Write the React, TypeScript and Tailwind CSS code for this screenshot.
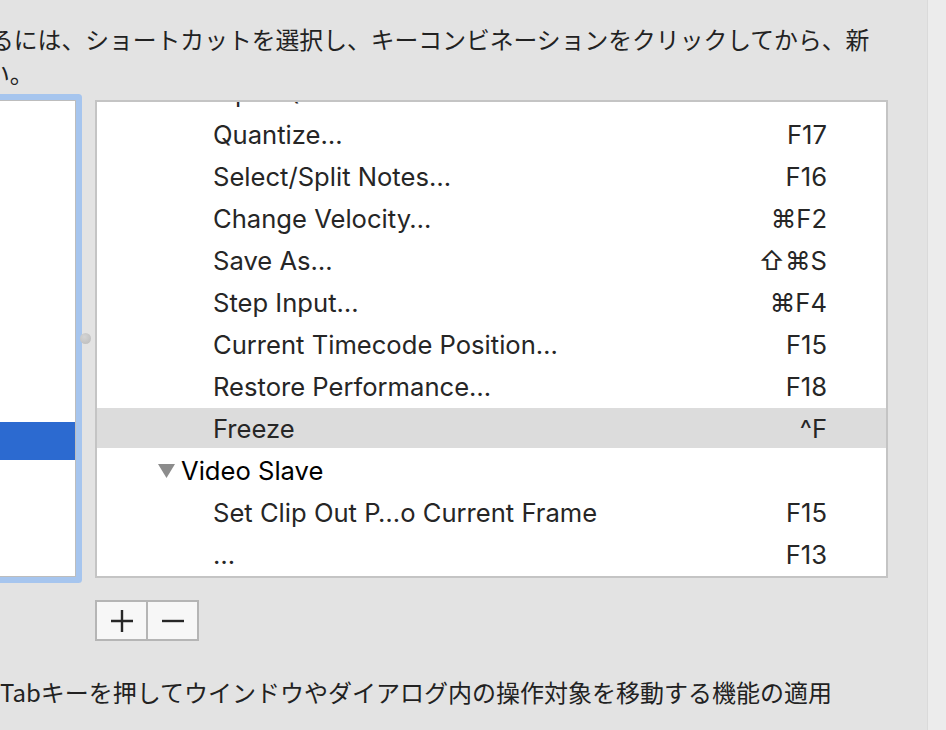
import React from "react";

const latin = "font-['Inter','DejaVu_Sans',sans-serif]";
const jp = "font-['Noto_Sans_CJK_JP','Noto_Sans',sans-serif]";

type Row = { label: string; key?: string; kind?: "item" | "group"; selected?: boolean };

const rows: Row[] = [
  { label: "Input Quantize…", key: "F19" },
  { label: "Quantize…", key: "F17" },
  { label: "Select/Split Notes…", key: "F16" },
  { label: "Change Velocity…", key: "⌘F2" },
  { label: "Save As…", key: "⇧⌘S" },
  { label: "Step Input…", key: "⌘F4" },
  { label: "Current Timecode Position…", key: "F15" },
  { label: "Restore Performance…", key: "F18" },
  { label: "Freeze", key: "^F", selected: true },
  { label: "Video Slave", kind: "group" },
  { label: "Set Clip Out P…o Current Frame", key: "F15" },
  { label: "…", key: "F13" },
];

function ListRow({ row }: { row: Row }) {
  if (row.kind === "group") {
    return (
      <div className="flex h-[40px] mb-[2px] pt-[2px] items-center pl-[61px]">
        <svg width="17" height="14" viewBox="0 0 17 14" className="mr-[6px]">
          <polygon points="0,0 17,0 8.5,14" fill="#8c8c8c" />
        </svg>
        <span className="text-[25.6px] text-black leading-none">{row.label}</span>
      </div>
    );
  }
  return (
    <div
      className={`flex h-[40px] mb-[2px] pt-[2px] items-center pl-[116px] pr-[59px] ${
        row.selected ? "bg-[#dcdcdc]" : ""
      }`}
    >
      <span className="flex-1 text-[25.6px] text-[#262626] leading-none whitespace-nowrap">{row.label}</span>
      <span className="text-[25.6px] text-[#262626] leading-none whitespace-nowrap">{row.key}</span>
    </div>
  );
}

export default function App() {
  return (
    <div className={`w-[946px] h-[730px] bg-[#e3e3e3] flex overflow-hidden ${latin}`}>
      <div className="w-[927px] flex flex-col overflow-hidden">
        <div className={`pt-[22px] ${jp} text-[23.8px] leading-[34px] text-[#222] whitespace-nowrap`}>
          <div className="-ml-[10px]">るには、ショートカットを選択し、キーコンビネーションをクリックしてから、新</div>
          <div className="-ml-[14px]">い。</div>
        </div>

        <div className="mt-[10px] flex h-[478px]">
          <div className="w-[76px] h-[477px] bg-white border border-l-0 border-[#bdbdbd] rounded-r-[1px] shadow-[0_0_0_6px_#a6c5ee]">
            <div className="mt-[321px] h-[38px] bg-[#2c6ad0]" />
          </div>
          <div className="w-[19px] flex items-center justify-center">
            <div className="w-[11px] h-[11px] rounded-full bg-[radial-gradient(circle_at_40%_35%,#d4d4d4,#bababa)] -mt-[2px]" />
          </div>
          <div className="w-[793px] h-[478px] bg-white border-2 border-[#c4c4c4] overflow-hidden">
            <div className="-mt-[30px]">
              {rows.map((r, i) => (
                <ListRow key={i} row={r} />
              ))}
            </div>
          </div>
        </div>

        <div className="mt-[22px] ml-[95px] flex w-[104px] h-[41px] border-2 border-[#b5b5b5] bg-[#f7f7f7]">
          <div className="flex-1 flex items-center justify-center border-r-2 border-[#b5b5b5]">
            <svg width="22" height="22" viewBox="0 0 22 22">
              <path d="M11 0V22M0 11H22" stroke="#262626" strokeWidth="2.4" />
            </svg>
          </div>
          <div className="flex-1 flex items-center justify-center">
            <svg width="22" height="22" viewBox="0 0 22 22">
              <path d="M0 11H22" stroke="#262626" strokeWidth="2.4" />
            </svg>
          </div>
        </div>

        <div className={`mt-[34px] ${jp} text-[24px] leading-[34px] text-[#222] whitespace-nowrap`}>
          Tabキーを押してウインドウやダイアログ内の操作対象を移動する機能の適用
        </div>
      </div>
      <div className="w-[19px] h-full bg-[#ececec] border-l border-[#dadada]" />
    </div>
  );
}
